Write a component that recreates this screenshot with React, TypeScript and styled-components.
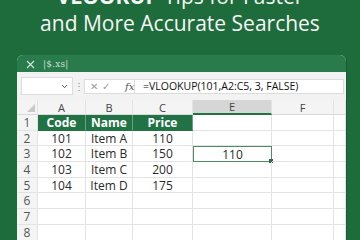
import React from 'react'
import styled, { createGlobalStyle, css } from 'styled-components'
import { ChevronDown } from 'lucide-react'

const green = '#1e6b3c'
const excelGreen = '#217346'

const GlobalStyle = createGlobalStyle`
  html, body {
    margin: 0;
    padding: 0;
    background: ${green};
    font-family: 'Open Sans', 'Liberation Sans', sans-serif;
    overflow: hidden;
  }
`

const Page = styled.div`
  width: 360px;
  height: 240px;
  overflow: hidden;
  display: flex;
  flex-direction: column;
`

const Title = styled.h1`
  flex-shrink: 0;
  margin: -17px 0 0 0;
  font-size: 21px;
  line-height: 27px;
  font-weight: 400;
  color: #f4f7f4;
  text-align: center;
  white-space: nowrap;

  b {
    font-weight: 700;
  }
`

const Window = styled.div`
  margin: 18px 0 0 17px;
  width: 329px;
  height: 185px;
  flex-shrink: 0;
  background: #ffffff;
  border-radius: 6px 6px 0 0;
  overflow: hidden;
  display: flex;
  flex-direction: column;
  box-shadow: 1px 0 0 #185a32;
`

const TitleBar = styled.div`
  flex-shrink: 0;
  height: 16px;
  background: #2a7b4b;
  display: flex;
  align-items: center;
  gap: 8px;
  padding: 1px 0 0 9px;
`

const FileName = styled.span`
  font-family: 'DejaVu Serif', serif;
  font-size: 9px;
  color: #c9dfd0;
  letter-spacing: 0.2px;
`

const FormulaBar = styled.div`
  flex-shrink: 0;
  height: 28px;
  background: #f2f2f2;
  display: flex;
  align-items: center;
  padding: 0 2px 0 4px;
  box-sizing: border-box;
`

const NameBox = styled.div`
  width: 52px;
  height: 18px;
  box-sizing: border-box;
  background: #fff;
  border: 1px solid #dcdcdc;
  display: flex;
  align-items: center;
  justify-content: flex-end;
  padding-right: 3px;
  color: #444;
`

const Dots = styled.span`
  width: 11px;
  text-align: center;
  font-size: 10px;
  color: #888;
`

const FormulaBox = styled.div`
  flex: 1;
  height: 15px;
  box-sizing: border-box;
  background: #fff;
  border: 1px solid #dcdcdc;
  display: flex;
  align-items: center;
`

const FxGroup = styled.div`
  width: 50px;
  height: 100%;
  display: flex;
  align-items: center;
  gap: 4px;
  padding-left: 5px;
  box-sizing: border-box;
  border-right: 1px solid #dcdcdc;
  color: #9a9a9a;
  font-size: 10px;
`

const Fx = styled.span`
  margin-left: 11px;
  font-family: 'DejaVu Serif', serif;
  font-style: italic;
  font-size: 10px;
  color: #555;
`

const Formula = styled.span`
  padding-left: 8px;
  font-size: 10.5px;
  color: #111;
  white-space: nowrap;
`

const Sheet = styled.div`
  flex-shrink: 0;
  display: grid;
  grid-template-columns: 21px 48px 47px 60px 79px 62px 12px;
  grid-template-rows: 15px repeat(8, 15.7px);
  background: #fff;
`

const cellBase = css`
  box-sizing: border-box;
  border-right: 1px solid #e3e3e3;
  border-bottom: 1px solid #e3e3e3;
  display: flex;
  align-items: center;
  justify-content: center;
  white-space: nowrap;
`

const ColHead = styled.div<{ $active?: boolean }>`
  ${cellBase}
  background: ${(p) => (p.$active ? '#d6d6d6' : '#f4f4f4')};
  border-bottom: ${(p) => (p.$active ? `2px solid ${excelGreen}` : '1px solid #d9d9d9')};
  font-size: 11px;
  color: #444;
`

const Corner = styled.div`
  ${cellBase}
  background: #f4f4f4;
  border-bottom: 1px solid #d9d9d9;
  position: relative;

  &::after {
    content: '';
    position: absolute;
    right: 2px;
    bottom: 2px;
    border-left: 8px solid transparent;
    border-bottom: 8px solid #c8c8c8;
  }
`

const RowNum = styled.div`
  ${cellBase}
  background: #f4f4f4;
  font-size: 12px;
  color: #555;
`

const Cell = styled.div<{ $head?: boolean; $selected?: boolean }>`
  ${cellBase}
  position: relative;
  font-size: 12px;
  color: #2a2a2a;
  ${(p) =>
    p.$head &&
    css`
      background: ${excelGreen};
      border-right-color: #6f9f80;
      border-bottom-color: ${excelGreen};
      color: #fff;
      font-weight: 700;
    `}
  ${(p) =>
    p.$selected &&
    css`
      border: 1.5px solid #4f8a62;
    `}
`

const Handle = styled.span`
  position: absolute;
  right: -2px;
  bottom: -2px;
  width: 4px;
  height: 4px;
  background: #2f6b45;
`

function CloseIcon() {
  return (
    <svg width="9" height="9" viewBox="0 0 9 9">
      <path d="M1 1 L8 8 M8 1 L1 8" stroke="#d3e4d8" strokeWidth="1.2" fill="none" />
    </svg>
  )
}

const columns = ['A', 'B', 'C', 'E', 'F', '']
const rows: string[][] = [
  ['Code', 'Name', 'Price', '', '', ''],
  ['101', 'Item A', '110', '', '', ''],
  ['102', 'Item B', '150', '110', '', ''],
  ['103', 'Item C', '200', '', '', ''],
  ['104', 'Item D', '175', '', '', ''],
  ['', '', '', '', '', ''],
  ['', '', '', '', '', ''],
  ['', '', '', '', '', '']
]

export default function App() {
  return (
    <Page>
      <GlobalStyle />
      <Title>
        <b>VLOOKUP</b> Tips for Faster
        <br />
        and More Accurate Searches
      </Title>
      <Window>
        <TitleBar>
          <CloseIcon />
          <FileName>|$.xs|</FileName>
        </TitleBar>
        <FormulaBar>
          <NameBox>
            <ChevronDown size={9} strokeWidth={2.5} />
          </NameBox>
          <Dots>⋮</Dots>
          <FormulaBox>
            <FxGroup>
              <span>✕</span>
              <span>✓</span>
              <Fx>fx</Fx>
            </FxGroup>
            <Formula>=VLOOKUP(101,A2:C5, 3, FALSE)</Formula>
          </FormulaBox>
        </FormulaBar>
        <Sheet>
          <Corner />
          {columns.map((c, i) => (
            <ColHead key={i} $active={c === 'E'}>
              {c}
            </ColHead>
          ))}
          {rows.map((row, r) => (
            <React.Fragment key={r}>
              <RowNum>{r + 1}</RowNum>
              {row.map((v, c) => {
                const selected = r === 2 && c === 3
                return (
                  <Cell key={c} $head={r === 0 && c < 3} $selected={selected}>
                    {v}
                    {selected && <Handle />}
                  </Cell>
                )
              })}
            </React.Fragment>
          ))}
        </Sheet>
      </Window>
    </Page>
  )
}
